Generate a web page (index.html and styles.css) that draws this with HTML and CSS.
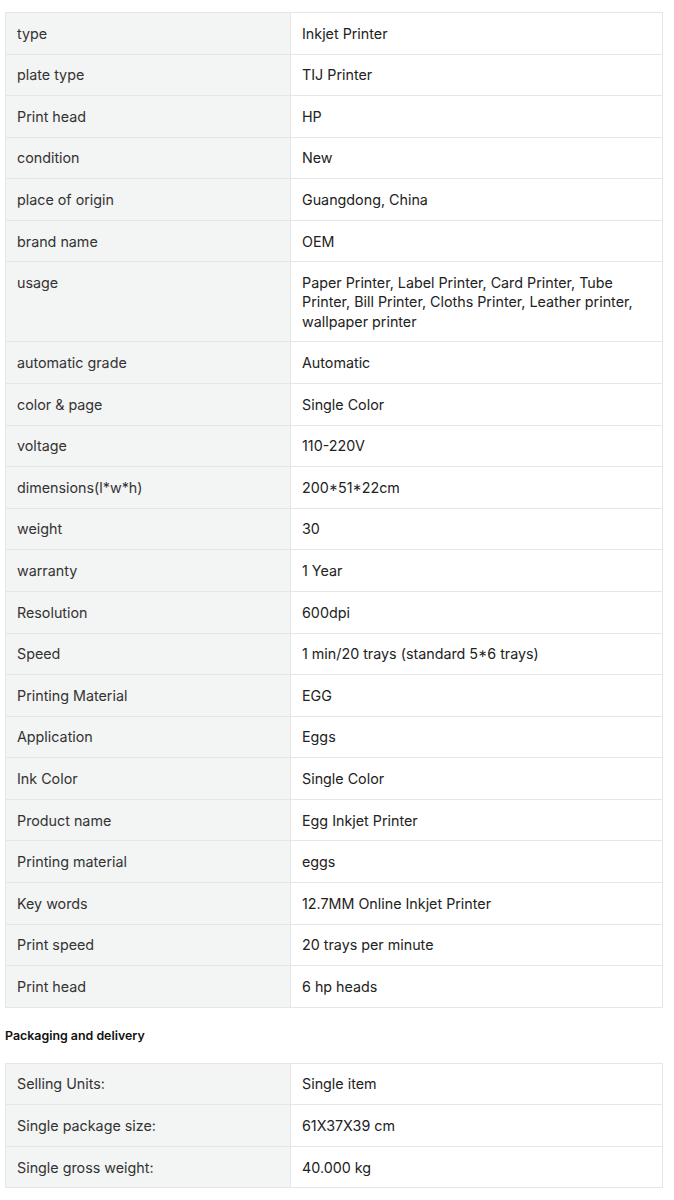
FILE: index.html
```html
<!DOCTYPE html>
<html>
<head>
<meta charset="utf-8">
<link rel="stylesheet" href="styles.css">
</head>
<body>
<div class="page">
<table class="spec">
<colgroup><col class="c-key"><col></colgroup>
<tbody>
<tr><td class="key">type</td><td class="val">Inkjet Printer</td></tr>
<tr><td class="key">plate type</td><td class="val">TIJ Printer</td></tr>
<tr><td class="key">Print head</td><td class="val">HP</td></tr>
<tr><td class="key">condition</td><td class="val">New</td></tr>
<tr><td class="key">place of origin</td><td class="val">Guangdong, China</td></tr>
<tr><td class="key">brand name</td><td class="val">OEM</td></tr>
<tr><td class="key">usage</td><td class="val">Paper Printer, Label Printer, Card Printer, Tube Printer, Bill Printer, Cloths Printer, Leather printer, wallpaper printer</td></tr>
<tr><td class="key">automatic grade</td><td class="val">Automatic</td></tr>
<tr><td class="key">color &amp; page</td><td class="val">Single Color</td></tr>
<tr><td class="key">voltage</td><td class="val">110-220V</td></tr>
<tr><td class="key">dimensions(l*w*h)</td><td class="val">200*51*22cm</td></tr>
<tr><td class="key">weight</td><td class="val">30</td></tr>
<tr><td class="key">warranty</td><td class="val">1 Year</td></tr>
<tr><td class="key">Resolution</td><td class="val">600dpi</td></tr>
<tr><td class="key">Speed</td><td class="val">1 min/20 trays (standard 5*6 trays)</td></tr>
<tr><td class="key">Printing Material</td><td class="val">EGG</td></tr>
<tr><td class="key">Application</td><td class="val">Eggs</td></tr>
<tr><td class="key">Ink Color</td><td class="val">Single Color</td></tr>
<tr><td class="key">Product name</td><td class="val">Egg Inkjet Printer</td></tr>
<tr><td class="key">Printing material</td><td class="val">eggs</td></tr>
<tr><td class="key">Key words</td><td class="val">12.7MM Online Inkjet Printer</td></tr>
<tr><td class="key">Print speed</td><td class="val">20 trays per minute</td></tr>
<tr><td class="key">Print head</td><td class="val">6 hp heads</td></tr>
</tbody>
</table>
<h3 class="section-title">Packaging and delivery</h3>
<table class="spec">
<colgroup><col class="c-key"><col></colgroup>
<tbody>
<tr><td class="key">Selling Units:</td><td class="val">Single item</td></tr>
<tr><td class="key">Single package size:</td><td class="val">61X37X39 cm</td></tr>
<tr><td class="key">Single gross weight:</td><td class="val">40.000 kg</td></tr>
</tbody>
</table>
</div>
</body>
</html>
```
FILE: styles.css
```css
html, body {
  margin: 0;
  padding: 0;
  background: #ffffff;
}
body {
  font-family: Inter, "Liberation Sans", sans-serif;
  color: #222222;
}
.page {
  padding: 12px 11px 0 5px;
}
.spec {
  width: 658px;
  border-collapse: collapse;
  table-layout: fixed;
  font-size: 14.3px;
  line-height: 19.2px;
}
.c-key {
  width: 285px;
}
.spec td {
  border: 1px solid #e6e6e6;
  padding: 10.7px 11px;
  vertical-align: top;
}
.key {
  background: #f3f4f4;
  color: #333333;
}
.val {
  background: #ffffff;
  padding-left: 10px;
  color: #222222;
}
.section-title {
  margin: 0;
  padding: 20px 0 19px 0;
  font-size: 12.4px;
  line-height: 16px;
  font-weight: 600;
  color: #111111;
}
```
